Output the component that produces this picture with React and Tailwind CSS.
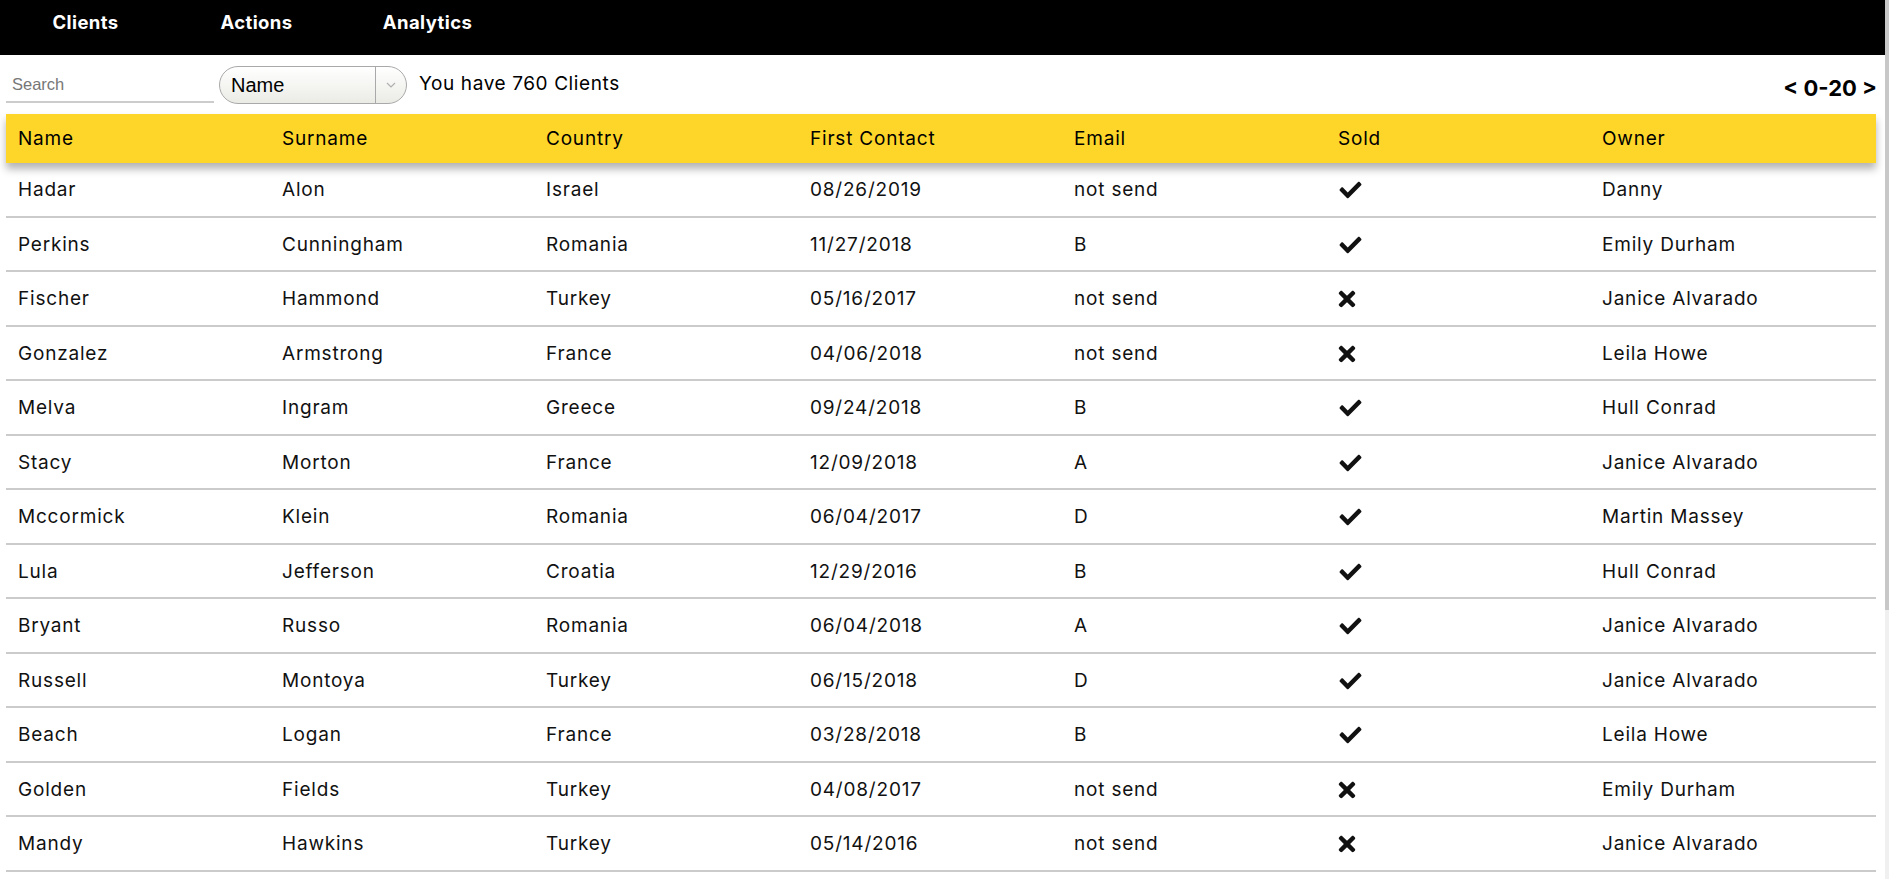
import { FaCheck, FaTimes } from "react-icons/fa";

const COLUMNS = ["Name", "Surname", "Country", "First Contact", "Email", "Sold", "Owner"];

const CLIENTS = [
    ["Hadar", "Alon", "Israel", "08/26/2019", "not send", true, "Danny"],
    ["Perkins", "Cunningham", "Romania", "11/27/2018", "B", true, "Emily Durham"],
    ["Fischer", "Hammond", "Turkey", "05/16/2017", "not send", false, "Janice Alvarado"],
    ["Gonzalez", "Armstrong", "France", "04/06/2018", "not send", false, "Leila Howe"],
    ["Melva", "Ingram", "Greece", "09/24/2018", "B", true, "Hull Conrad"],
    ["Stacy", "Morton", "France", "12/09/2018", "A", true, "Janice Alvarado"],
    ["Mccormick", "Klein", "Romania", "06/04/2017", "D", true, "Martin Massey"],
    ["Lula", "Jefferson", "Croatia", "12/29/2016", "B", true, "Hull Conrad"],
    ["Bryant", "Russo", "Romania", "06/04/2018", "A", true, "Janice Alvarado"],
    ["Russell", "Montoya", "Turkey", "06/15/2018", "D", true, "Janice Alvarado"],
    ["Beach", "Logan", "France", "03/28/2018", "B", true, "Leila Howe"],
    ["Golden", "Fields", "Turkey", "04/08/2017", "not send", false, "Emily Durham"],
    ["Mandy", "Hawkins", "Turkey", "05/14/2016", "not send", false, "Janice Alvarado"],
];

const font = { fontFamily: "Inter, 'Noto Sans', sans-serif" };
const arial = { fontFamily: "Arial, 'Liberation Sans', sans-serif" };

function Nav() {
    return (
        <div className="h-[55px] bg-black flex">
            {["Clients", "Actions", "Analytics"].map(item => (
                <div key={item} className="w-[171px] text-center text-white font-bold text-[18.5px] tracking-[0.4px] pt-[9px]">
                    {item}
                </div>
            ))}
        </div>
    );
}

function Toolbar() {
    return (
        <div className="h-[59px] flex items-center pl-[6px] pr-[8px]">
            <input
                placeholder="Search"
                className="w-[208px] h-[36px] mt-[1px] border-b-2 border-[#cccccc] pl-[6px] text-[16.5px] outline-none placeholder:text-[#777]"
                style={arial}
            />
            {/* Sort select */}
            <div className="ml-[5px] w-[188px] h-[38px] rounded-full border border-[#a9a9a9] bg-gradient-to-b from-white to-[#ebebe6] flex items-center">
                <span className="flex-1 pl-[11px] text-[20px] text-black" style={arial}>Name</span>
                <div className="w-[31px] h-full border-l border-[#a9a9a9] flex items-center justify-center">
                    <svg width="10" height="6" viewBox="0 0 10 6" fill="none">
                        <path d="M1 1l4 4 4-4" stroke="#b0b0b0" strokeWidth="1.2" />
                    </svg>
                </div>
            </div>
            <span className="ml-[12px] text-[19px] tracking-[0.6px] text-black">You have 760 Clients</span>
            <span className="ml-auto mt-[8px] text-[22px] font-bold text-black">&lt; 0-20 &gt;</span>
        </div>
    );
}

export default function App() {
    return (
        <div className="h-[879px] w-[1889px] overflow-hidden flex bg-white" style={font}>
            <div className="w-[1885px]">
                <Nav />
                <Toolbar />

                {/* Table header */}
                <div className="ml-[6px] w-[1870px] h-[49px] pt-[2px] bg-[#fed62a] grid grid-cols-[repeat(7,264px)] pl-[12px] items-center text-[19px] tracking-[0.8px] text-black shadow-[0_6px_8px_rgba(0,0,0,0.3)] relative">
                    {COLUMNS.map(col => <div key={col}>{col}</div>)}
                </div>

                {/* Rows */}
                {CLIENTS.map((row, i) => (
                    <div key={i} className="ml-[6px] w-[1870px] h-[54.5px] pt-[2px] border-b-[2.5px] border-[#cbcbcb] grid grid-cols-[repeat(7,264px)] pl-[12px] items-center text-[19px] tracking-[0.8px] text-[#111]">
                        {row.map((cell, j) => (
                            <div key={j}>
                                {j === 5
                                    ? (cell
                                        ? <FaCheck className="w-[27px] h-[22px] -ml-[1px]" />
                                        : <FaTimes className="w-[24px] h-[24px] -ml-[3px]" />)
                                    : cell}
                            </div>
                        ))}
                    </div>
                ))}
            </div>

            {/* Scrollbar */}
            <div className="w-[4px] bg-[#f0f0f0] flex flex-col">
                <div className="h-[610px] bg-[#c8c8c8]" />
            </div>
        </div>
    );
}
